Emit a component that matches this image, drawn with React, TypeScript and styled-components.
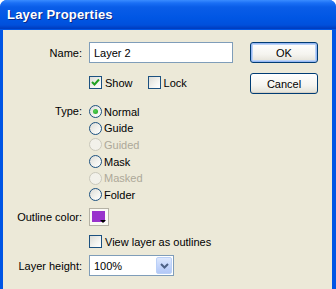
import styled, { createGlobalStyle } from "styled-components";

const GlobalStyle = createGlobalStyle`
  html, body {
    margin: 0;
    padding: 0;
    background: #ffffff;
  }
  body {
    font-family: "Liberation Sans", Arial, sans-serif;
    font-size: 11px;
    color: #000000;
  }
`;

const typeOptions = [
  { label: "Normal", checked: true, disabled: false },
  { label: "Guide", checked: false, disabled: false },
  { label: "Guided", checked: false, disabled: true },
  { label: "Mask", checked: false, disabled: false },
  { label: "Masked", checked: false, disabled: true },
  { label: "Folder", checked: false, disabled: false },
];

const App = () => {
  return (
    <Window>
      <GlobalStyle />
      <TitleBar>
        <span>Layer Properties</span>
      </TitleBar>
      <Body>
        <Form>
          <FieldRow $top={12}>
            <Label>Name:</Label>
            <TextInput>Layer 2</TextInput>
          </FieldRow>

          <FieldRow $top={13}>
            <Label />
            <CheckGroup>
              <CheckItem>
                <CheckBox $checked>
                  <svg width="9" height="9" viewBox="0 0 9 9">
                    <path d="M1 4 L3.5 6.5 L8 1.5" stroke="#21a121" strokeWidth="2" fill="none" />
                  </svg>
                </CheckBox>
                <span>Show</span>
              </CheckItem>
              <CheckItem>
                <CheckBox />
                <span>Lock</span>
              </CheckItem>
            </CheckGroup>
          </FieldRow>

          <FieldRow $top={16} $align="flex-start">
            <Label $lineHeight={13}>Type:</Label>
            <RadioList>
              {typeOptions.map((opt) => (
                <RadioItem key={opt.label} $disabled={opt.disabled}>
                  <Radio $disabled={opt.disabled}>{opt.checked && <RadioDot />}</Radio>
                  <span>{opt.label}</span>
                </RadioItem>
              ))}
            </RadioList>
          </FieldRow>

          <FieldRow $top={7}>
            <Label>Outline color:</Label>
            <Swatch>
              <SwatchColor />
              <SwatchArrow />
            </Swatch>
          </FieldRow>

          <FieldRow $top={9}>
            <Label />
            <CheckItem>
              <CheckBox />
              <span>View layer as outlines</span>
            </CheckItem>
          </FieldRow>

          <FieldRow $top={7}>
            <Label>Layer height:</Label>
            <Select>
              <span>100%</span>
              <SelectButton>
                <svg width="9" height="6" viewBox="0 0 9 6">
                  <path d="M1 1 L4.5 4.5 L8 1" stroke="#4d6185" strokeWidth="2" fill="none" />
                </svg>
              </SelectButton>
            </Select>
          </FieldRow>
        </Form>

        <ButtonColumn>
          <Button $default>OK</Button>
          <Button>Cancel</Button>
        </ButtonColumn>
      </Body>
    </Window>
  );
};

export default App;

const Window = styled.div`
  width: 336px;
  height: 289px;
  overflow: hidden;
  display: flex;
  flex-direction: column;
  border-radius: 7px 7px 0 0;
  background: #0055e5;
`;

const TitleBar = styled.div`
  height: 29px;
  flex-shrink: 0;
  display: flex;
  align-items: center;
  padding: 0 7px;
  background: linear-gradient(
    to bottom,
    #3a8cff 0px,
    #1a6ff5 3px,
    #0a5de8 7px,
    #0056e4 18px,
    #0050dc 25px,
    #003fc4 28px,
    #003dbd 29px
  );
  span {
    font-family: "Liberation Sans", Arial, sans-serif;
    font-weight: bold;
    font-size: 13px;
    color: #ffffff;
    text-shadow: 1px 1px 0 #0a2a8a;
    letter-spacing: 0.2px;
  }
`;

const Body = styled.div`
  flex: 1;
  display: flex;
  margin: 1px 4px 0 3px;
  background: #ece9d8;
`;

const Form = styled.div`
  flex: 1;
  display: flex;
  flex-direction: column;
`;

const FieldRow = styled.div<{ $top: number; $align?: string }>`
  display: flex;
  align-items: ${(p) => p.$align || "center"};
  margin-top: ${(p) => p.$top}px;
`;

const Label = styled.div<{ $lineHeight?: number }>`
  width: 79px;
  margin-right: 7px;
  flex-shrink: 0;
  text-align: right;
  line-height: ${(p) => (p.$lineHeight ? `${p.$lineHeight}px` : "normal")};
`;

const TextInput = styled.div`
  width: 144px;
  height: 21px;
  box-sizing: border-box;
  display: flex;
  align-items: center;
  padding: 0 4px;
  background: #ffffff;
  border: 1px solid #7f9db9;
`;

const CheckGroup = styled.div`
  display: flex;
  gap: 15px;
`;

const CheckItem = styled.label`
  display: flex;
  align-items: center;
  gap: 3px;
  height: 13px;
`;

const CheckBox = styled.div<{ $checked?: boolean }>`
  width: 13px;
  height: 13px;
  box-sizing: border-box;
  border: 1px solid #1c5180;
  background: linear-gradient(135deg, #dcdcd7 0%, #f4f4f0 60%, #ffffff 100%);
  display: flex;
  align-items: center;
  justify-content: center;
`;

const RadioList = styled.div`
  display: flex;
  flex-direction: column;
  gap: 3.7px;
`;

const RadioItem = styled.div<{ $disabled?: boolean }>`
  display: flex;
  align-items: center;
  gap: 2px;
  height: 13px;
  color: ${(p) => (p.$disabled ? "#aca899" : "#000000")};
`;

const Radio = styled.div<{ $disabled?: boolean }>`
  width: 13px;
  height: 13px;
  box-sizing: border-box;
  border-radius: 50%;
  border: 1px solid ${(p) => (p.$disabled ? "#cac8bb" : "#1c5180")};
  background: ${(p) =>
    p.$disabled
      ? "#f2f1ea"
      : "linear-gradient(135deg, #dcdcd7 0%, #f4f4f0 60%, #ffffff 100%)"};
  display: flex;
  align-items: center;
  justify-content: center;
`;

const RadioDot = styled.div`
  width: 5px;
  height: 5px;
  border-radius: 50%;
  background: radial-gradient(circle at 40% 40%, #55d155, #21a121);
`;

const Swatch = styled.div`
  position: relative;
  width: 20px;
  height: 18px;
  box-sizing: border-box;
  border: 1px solid #b5b2a5;
  background: #fbfaf5;
  display: flex;
  padding: 2px;
`;

const SwatchColor = styled.div`
  width: 13px;
  height: 11px;
  background: #9933cc;
`;

const SwatchArrow = styled.div`
  position: absolute;
  right: 2px;
  bottom: 2px;
  width: 0;
  height: 0;
  border-left: 3px solid transparent;
  border-right: 3px solid transparent;
  border-top: 3px solid #000000;
`;

const Select = styled.div`
  width: 85px;
  height: 21px;
  box-sizing: border-box;
  display: flex;
  align-items: center;
  justify-content: space-between;
  padding: 1px 1px 1px 4px;
  background: #ffffff;
  border: 1px solid #7f9db9;
`;

const SelectButton = styled.div`
  width: 16px;
  height: 17px;
  box-sizing: border-box;
  display: flex;
  align-items: center;
  justify-content: center;
  border-radius: 2px;
  border: 1px solid #bad0f7;
  background: linear-gradient(to bottom, #dde8fd 0%, #c1d3fb 60%, #b3c8f6 100%);
`;

const ButtonColumn = styled.div`
  display: flex;
  flex-direction: column;
  gap: 10px;
  padding: 12px 14px 0 0;
`;

const Button = styled.button<{ $default?: boolean }>`
  width: 68px;
  height: 21px;
  box-sizing: border-box;
  padding: 0;
  font-family: "Liberation Sans", Arial, sans-serif;
  font-size: 11px;
  color: #000000;
  border: 1px solid #003c74;
  border-radius: 3px;
  background: linear-gradient(to bottom, #ffffff 0%, #f5f4ef 60%, #e3e1d6 100%);
  box-shadow: ${(p) =>
    p.$default ? "inset 0 0 0 1px #98b8f4, inset 0 0 0 2px #bcd4f6" : "inset 0 -1px 0 #d6d0c5"};
  cursor: pointer;
`;
